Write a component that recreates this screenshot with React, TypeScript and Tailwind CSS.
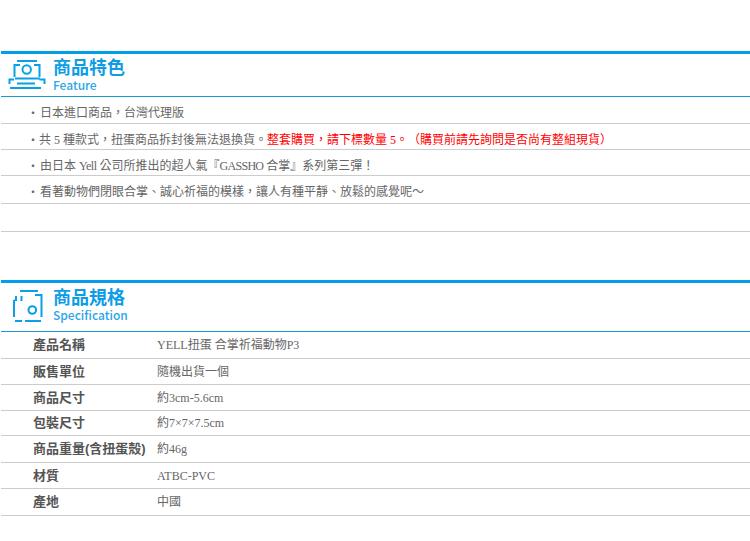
const sans = "font-['Liberation_Sans','Noto_Sans_CJK_TC',sans-serif]";
const serif = "font-['Liberation_Serif','Noto_Sans_CJK_TC',serif]";

function FeatureIcon() {
  return (
    <svg width="38" height="31" viewBox="8 59 38 31" fill="none" stroke="#08a0e9" strokeWidth="2" className="block">
      <path d="M17 61h20M20 65h-5.500v12M34 65h5.500v12" />
      <circle cx="26.700" cy="69.500" r="4.200" />
      <path d="M15 78.500h25M14 79.500h-4.500v4.500M39.500 79.500h5v4.500M17 83.500h18M10 88h31" />
    </svg>
  );
}

function SpecIcon() {
  return (
    <svg width="32" height="35" viewBox="12 288 32 35" fill="none" stroke="#08a0e9" strokeWidth="2" className="block">
      <path d="M20 291h18M14 300v17M14.500 300h1.500v-4M21.500 296v5M35 295h6.500v22M15 321h7M25 321h16" />
      <circle cx="32.300" cy="310" r="3.800" />
    </svg>
  );
}

function Heading({ title, sub, icon, gap, h, pad }: { title: string; sub: string; icon: React.ReactNode; gap: string; h: string; pad: string }) {
  return (
    <div className={`ml-px border-t-[3px] border-b border-t-[#00a0e9] border-b-[#1a9ad6] ${h} flex items-start`}>
      <div className={`${gap} shrink-0`}>{icon}</div>
      <div className={`flex flex-col ${pad}`}>
        <span className={`${sans} text-[18px] leading-[20px] font-bold text-[#0d9de6]`}>{title}</span>
        <span className="font-['Noto_Sans_CJK_TC',sans-serif] font-medium text-[12px] leading-[14px] text-[#2ba6e8]">{sub}</span>
      </div>
    </div>
  );
}

const rowLine = "ml-px border-b border-[#cccccc]";

function Feature({ h, pt, children }: { h: string; pt: string; children?: React.ReactNode }) {
  return (
    <div className={`${rowLine} ${h} ${pt} pl-[26px] flex items-center text-[12px] text-[#666666] ${serif} whitespace-nowrap [text-spacing-trim:space-all]`}>
      {children && <span className="w-[13px] shrink-0 font-['Noto_Sans_CJK_TC',sans-serif]">‧</span>}
      {children}
    </div>
  );
}

function Spec({ h, label, value }: { h: string; label: string; value: string }) {
  return (
    <div className={`${rowLine} ${h} flex items-center whitespace-nowrap`}>
      <span className={`w-[156px] pl-[32px] text-[13px] font-bold text-[#555555] ${sans}`}>{label}</span>
      <span className={`text-[12px] text-[#666666] ${serif}`}>{value}</span>
    </div>
  );
}

export default function App() {
  return (
    <div className="w-[750px] h-[541px] bg-white overflow-hidden pt-[51px]">
      <Heading title="商品特色" sub="Feature" h="h-[46px]" pad="pt-[4px]" gap="ml-[7px] mr-[7px] mt-[5px]" icon={<FeatureIcon />} />
      <Feature h="h-[27px]" pt="pt-[6px]">日本進口商品，台灣代理版</Feature>
      <Feature h="h-[26px]" pt="pt-[6px]">
        <span className="ml-[-1px]">
          共 5 種款式，扭蛋商品拆封後無法退換貨。
          <span className="text-[#ff0000]">整套購買，請下標數量 5。（購買前請先詢問是否尚有整組現貨）</span>
        </span>
      </Feature>
      <Feature h="h-[26px]" pt="pt-[6px]">
        <span>
          由日本 <span className="tracking-[-0.5px]">Yell</span> 公司所推出的超人氣『<span className="tracking-[-0.7px]">GASSHO</span> 合掌』系列第三彈！
        </span>
      </Feature>
      <Feature h="h-[28px]" pt="pt-[4px]">看著動物們閉眼合掌、誠心祈福的模樣，讓人有種平靜、放鬆的感覺呢～</Feature>
      <Feature h="h-[28px]" pt="pt-0" />
      <div className="h-[48px]" />
      <Heading title="商品規格" sub="Specification" h="h-[52px]" pad="pt-[5px]" gap="ml-[11px] mr-[9px] mt-[5px]" icon={<SpecIcon />} />
      <Spec h="h-[27px]" label="產品名稱" value="YELL扭蛋 合掌祈福動物P3" />
      <Spec h="h-[26px]" label="販售單位" value="隨機出貨一個" />
      <Spec h="h-[26px]" label="商品尺寸" value="約3cm-5.6cm" />
      <Spec h="h-[25px]" label="包裝尺寸" value="約7×7×7.5cm" />
      <Spec h="h-[27px]" label="商品重量(含扭蛋殼)" value="約46g" />
      <Spec h="h-[26px]" label="材質" value="ATBC-PVC" />
      <Spec h="h-[27px]" label="產地" value="中國" />
    </div>
  );
}
